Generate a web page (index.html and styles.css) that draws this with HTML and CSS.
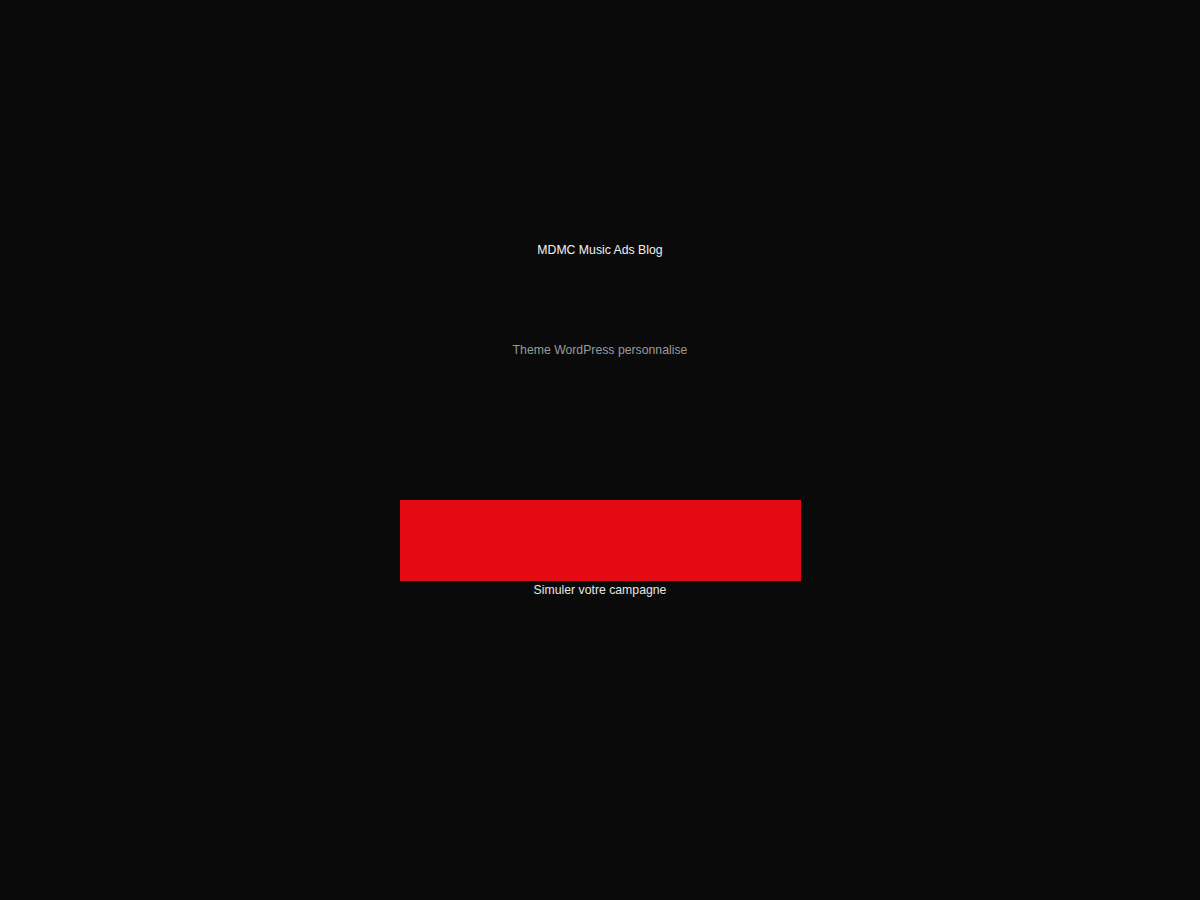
FILE: index.html
```html
<!DOCTYPE html>
<html lang="fr">
<head>
<meta charset="utf-8">
<title>MDMC Music Ads Blog</title>
<link rel="stylesheet" href="styles.css">
</head>
<body>
<main class="page">
  <h1 class="site-title">MDMC Music Ads Blog</h1>
  <p class="site-desc">Theme WordPress personnalise</p>
  <div class="cta">
    <div class="cta-box"></div>
    <span class="cta-label">Simuler votre campagne</span>
  </div>
</main>
</body>
</html>
```
FILE: styles.css
```css
html, body {
  margin: 0;
  padding: 0;
  background: #0a0a0a;
  height: 100%;
}
body {
  font-family: "Liberation Sans", Arial, sans-serif;
  font-size: 12.25px;
  line-height: 14px;
  color: #ffffff;
}
.page {
  display: flex;
  flex-direction: column;
  align-items: center;
  padding-top: 243px;
}
.site-title {
  margin: 0;
  font-size: 12.25px;
  font-weight: normal;
  line-height: 14px;
  color: #f2f2f2;
}
.site-desc {
  margin: 86px 0 0;
  color: #9a9a9a;
}
.cta {
  margin-top: 143px;
  display: flex;
  flex-direction: column;
  align-items: center;
}
.cta-box {
  width: 401px;
  height: 81px;
  background: #e50914;
}
.cta-label {
  margin-top: 2px;
  color: #e6e6e6;
}
```
